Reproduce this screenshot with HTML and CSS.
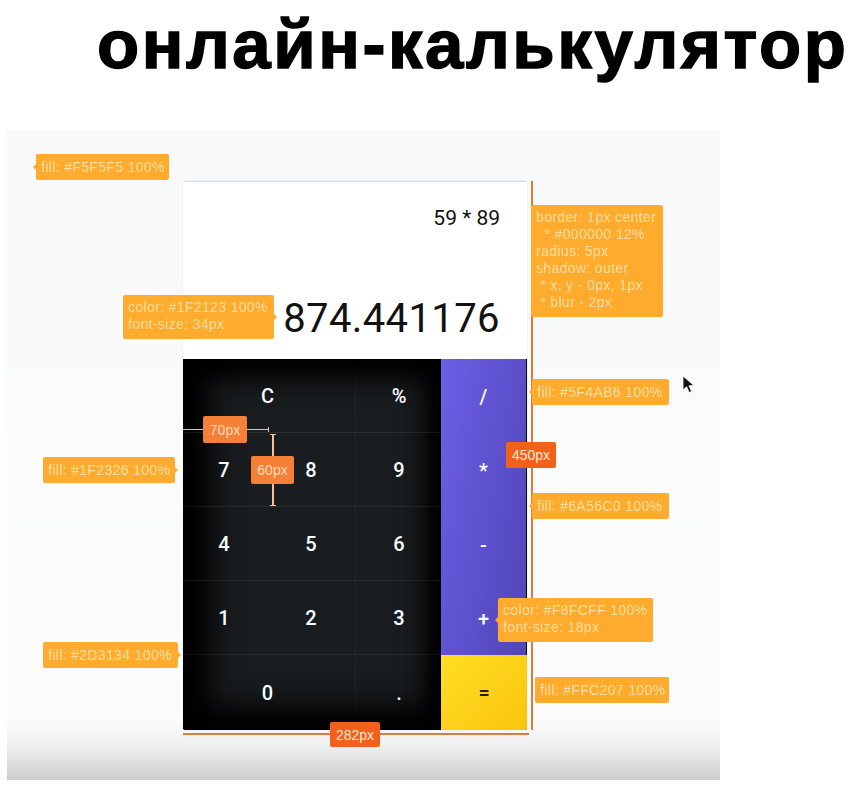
FILE: index.html
```html
<!DOCTYPE html>
<html lang="ru">
<head>
    <meta charset="UTF-8" />
    <title>Онлайн-калькулятор</title>
    <meta name="viewport" content="width=device-width, initial-scale=1" />
    <link rel="stylesheet" href="styles.css">
</head>
<body>
    <h1 class="title">онлайн-калькулятор</h1>
    <div class="stage">
        <div class="calc">
            <div class="display">
                <div class="expr">59 * 89</div>
                <div class="result">874.441176</div>
            </div>
            <div class="keys">
                <div class="digits">
                    <div class="key wide">C</div>
                    <div class="key">%</div>
                    <div class="key">7</div>
                    <div class="key">8</div>
                    <div class="key">9</div>
                    <div class="key">4</div>
                    <div class="key">5</div>
                    <div class="key">6</div>
                    <div class="key">1</div>
                    <div class="key">2</div>
                    <div class="key">3</div>
                    <div class="key wide">0</div>
                    <div class="key">.</div>
                </div>
                <div class="ops">
                    <div class="op-list">
                        <div class="key">/</div>
                        <div class="key">*</div>
                        <div class="key">-</div>
                        <div class="key">+</div>
                    </div>
                    <div class="key equals">=</div>
                </div>
            </div>
        </div>

        <!-- spec annotations on top of the mockup -->
        <div class="note tip-left n-bg">fill: #F5F5F5 100%</div>
        <div class="note tip-right n-color">color: #1F2123 100%<br>font-size: 34px</div>
        <div class="note n-border">border: 1px center<br>&nbsp;&nbsp;* #000000 12%<br>radius: 5px<br>shadow: outer<br>&nbsp;* x, y - 0px, 1px<br>&nbsp;* blur - 2px</div>
        <div class="note tip-left n-op1">fill: #5F4AB6 100%</div>
        <div class="note tip-left n-op2">fill: #6A56C0 100%</div>
        <div class="note tip-right n-key1">fill: #1F2326 100%</div>
        <div class="note tip-right n-key2">fill: #2D3134 100%</div>
        <div class="note tip-left n-font">color: #F8FCFF 100%<br>font-size: 18px</div>
        <div class="note n-eq">fill: #FFC207 100%</div>

        <div class="line l-right"></div>
        <div class="line l-bottom"></div>
        <div class="line pale l-w70"></div>
        <div class="line pale l-h60"></div>
        <div class="size s-450">450px</div>
        <div class="size s-282">282px</div>
        <div class="size light s-70">70px</div>
        <div class="size light s-60">60px</div>

        <svg class="cursor" width="14" height="20" viewBox="0 0 14 20">
            <path d="M1 1 L1 15 L4.6 11.8 L7.2 17.6 L9.6 16.4 L7 10.8 L12 10.6 Z" fill="#111" stroke="#fff" stroke-width="0.8"/>
        </svg>
    </div>
</body>
</html>
```

FILE: styles.css
```css
html, body {
    height: 100%;
}
body {
    margin: 0;
    width: 862px;
    height: 785px;
    overflow: hidden;
    background: #fff;
    font-family: Roboto, "Liberation Sans", sans-serif;
}
.title {
    margin: 0;
    height: 130px;
    box-sizing: border-box;
    padding: 7px 0 0 97px;
    font-family: "Liberation Sans", Arial, sans-serif;
    font-size: 69px;
    font-weight: 700;
    line-height: 76px;
    letter-spacing: 2.55px;
    -webkit-text-stroke: 1.4px #000;
    color: #000;
    white-space: nowrap;
}
.stage {
    position: relative;
    width: 713px;
    height: 650px;
    margin-left: 7px;
    box-sizing: border-box;
    padding: 51px 0 0 176px;
    background: linear-gradient(to bottom, #f8f9fa 0, #fcfcfc 590px, #f0f0f0 615px, #cdcdcd 650px);
}
.calc {
    width: 344px;
    height: 549px;
    border-radius: 3px;
    overflow: hidden;
    box-shadow: 0 0 1px rgba(0,0,0,0.3);
}
.display {
    height: 178px;
    box-sizing: border-box;
    background: #fff;
    border-top: 1px solid #d8d8d8;
    color: #111;
    text-align: right;
    padding: 24px 27px 0 0;
}
.expr {
    font-size: 21px;
    line-height: 24px;
}
.result {
    margin-top: 64px;
    font-size: 40px;
    line-height: 50px;
    letter-spacing: 0.4px;
}
.keys {
    display: flex;
    height: 371px;
    background: #000;
}
.digits {
    position: relative;
    display: grid;
    grid-template-columns: 82px 92px 84px;
    grid-template-rows: repeat(4, 74px) 75px;
    width: 258px;
    background: #1a1d20;
}
/* dark fade round the edges of the keypad */
.digits::after {
    content: "";
    position: absolute;
    inset: 0;
    box-shadow: inset 14px 0 34px 10px #000, inset -6px 0 16px 0 #000, inset 0 8px 28px 4px #000, inset 0 -12px 36px 6px #000;
    pointer-events: none;
}
/* column seam */
.digits::before {
    content: "";
    position: absolute;
    left: 172px;
    top: 0;
    bottom: 0;
    width: 1px;
    background: rgba(255,255,255,0.05);
}
.key {
    display: flex;
    align-items: center;
    justify-content: center;
    position: relative;
    z-index: 1;
    box-sizing: border-box;
    padding-top: 1px;
    color: #f8fcff;
    font-size: 20px;
    font-weight: 500;
}
.digits .key {
    border-bottom: 1px solid rgba(255,255,255,0.07);
}
.digits .key:nth-last-child(-n+2) {
    border-bottom: none;
}
.digits .wide {
    grid-column: span 2;
    padding-right: 5px;
}
.ops {
    display: flex;
    flex-direction: column;
    width: 86px;
}
.op-list {
    display: grid;
    grid-template-rows: repeat(4, 74px);
    box-sizing: border-box;
    width: 85px;
    height: 296px;
    background: linear-gradient(100deg, #6b5fe6 0, #5b4fca 60%, #5046b6 100%);
}
.equals {
    height: 75px;
    background: linear-gradient(135deg, #ffdf24, #fbc40e);
    color: #1f2123;
}
.note {
    position: absolute;
    z-index: 3;
    box-sizing: border-box;
    display: flex;
    align-items: center;
    padding: 0 2px 0 5px;
    background: #ffab2e;
    border-radius: 2px;
    color: rgba(255,232,180,0.85);
    font-family: "Liberation Sans", sans-serif;
    font-size: 14px;
    letter-spacing: 0.35px;
    line-height: 17px;
    white-space: nowrap;
    filter: blur(0.4px);
}
.note.n-color, .note.n-border, .note.n-font {
    display: block;
    padding-top: 4px;
}
.tip-left::before, .tip-right::after {
    content: "";
    position: absolute;
    top: 50%;
    margin-top: -3px;
    border: 3px solid transparent;
}
.tip-left::before {
    left: -3px;
    border-left: none;
    border-right-color: #ffab2e;
}
.tip-right::after {
    right: -3px;
    border-right: none;
    border-left-color: #ffab2e;
}
.n-bg { left: 29px; top: 24px; width: 133px; height: 26px; }
.n-color { left: 116px; top: 165px; width: 151px; height: 44px; }
.n-border { left: 524px; top: 75px; width: 132px; height: 112px; }
.n-op1 { left: 525px; top: 249px; width: 137px; height: 26px; }
.n-op2 { left: 525px; top: 363px; width: 137px; height: 26px; }
.n-key1 { left: 36px; top: 327px; width: 132px; height: 26px; }
.n-key2 { left: 36px; top: 512px; width: 135px; height: 26px; }
.n-font { left: 491px; top: 468px; width: 155px; height: 44px; }
.n-eq { left: 528px; top: 547px; width: 134px; height: 26px; }
.line {
    position: absolute;
    z-index: 2;
    background: #dd7a3e;
}
.pale {
    background: #f7bd96;
}
.l-right { left: 524px; top: 51px; width: 2px; height: 549px; }
.l-bottom { left: 176px; top: 603px; width: 346px; height: 2px; }
.l-w70 { left: 176px; top: 299px; width: 86px; height: 1px; }
.l-h60 { left: 265px; top: 304px; width: 2px; height: 72px; }
/* end caps on the measure lines */
.l-w70::after {
    content: "";
    position: absolute;
    right: 0;
    top: -2px;
    width: 1px;
    height: 5px;
    background: #f7bd96;
}
.l-h60::before, .l-h60::after {
    content: "";
    position: absolute;
    left: -2px;
    width: 6px;
    height: 1px;
    background: #f7bd96;
}
.l-h60::before { top: 0; }
.l-h60::after { bottom: 0; }
.size {
    position: absolute;
    z-index: 4;
    box-sizing: border-box;
    display: flex;
    align-items: center;
    justify-content: center;
    background: #f2601c;
    border-radius: 2px;
    color: #ffe9d6;
    font-family: "Liberation Sans", sans-serif;
    font-size: 14px;
}
.light {
    background: #f68038;
    color: #ffdcb4;
}
.s-450 { left: 499px; top: 312px; width: 50px; height: 26px; }
.s-282 { left: 323px; top: 592px; width: 50px; height: 25px; }
.s-70 { left: 196px; top: 286px; width: 44px; height: 27px; }
.s-60 { left: 244px; top: 326px; width: 43px; height: 28px; }
.cursor {
    position: absolute;
    left: 675px;
    top: 245px;
}
```
